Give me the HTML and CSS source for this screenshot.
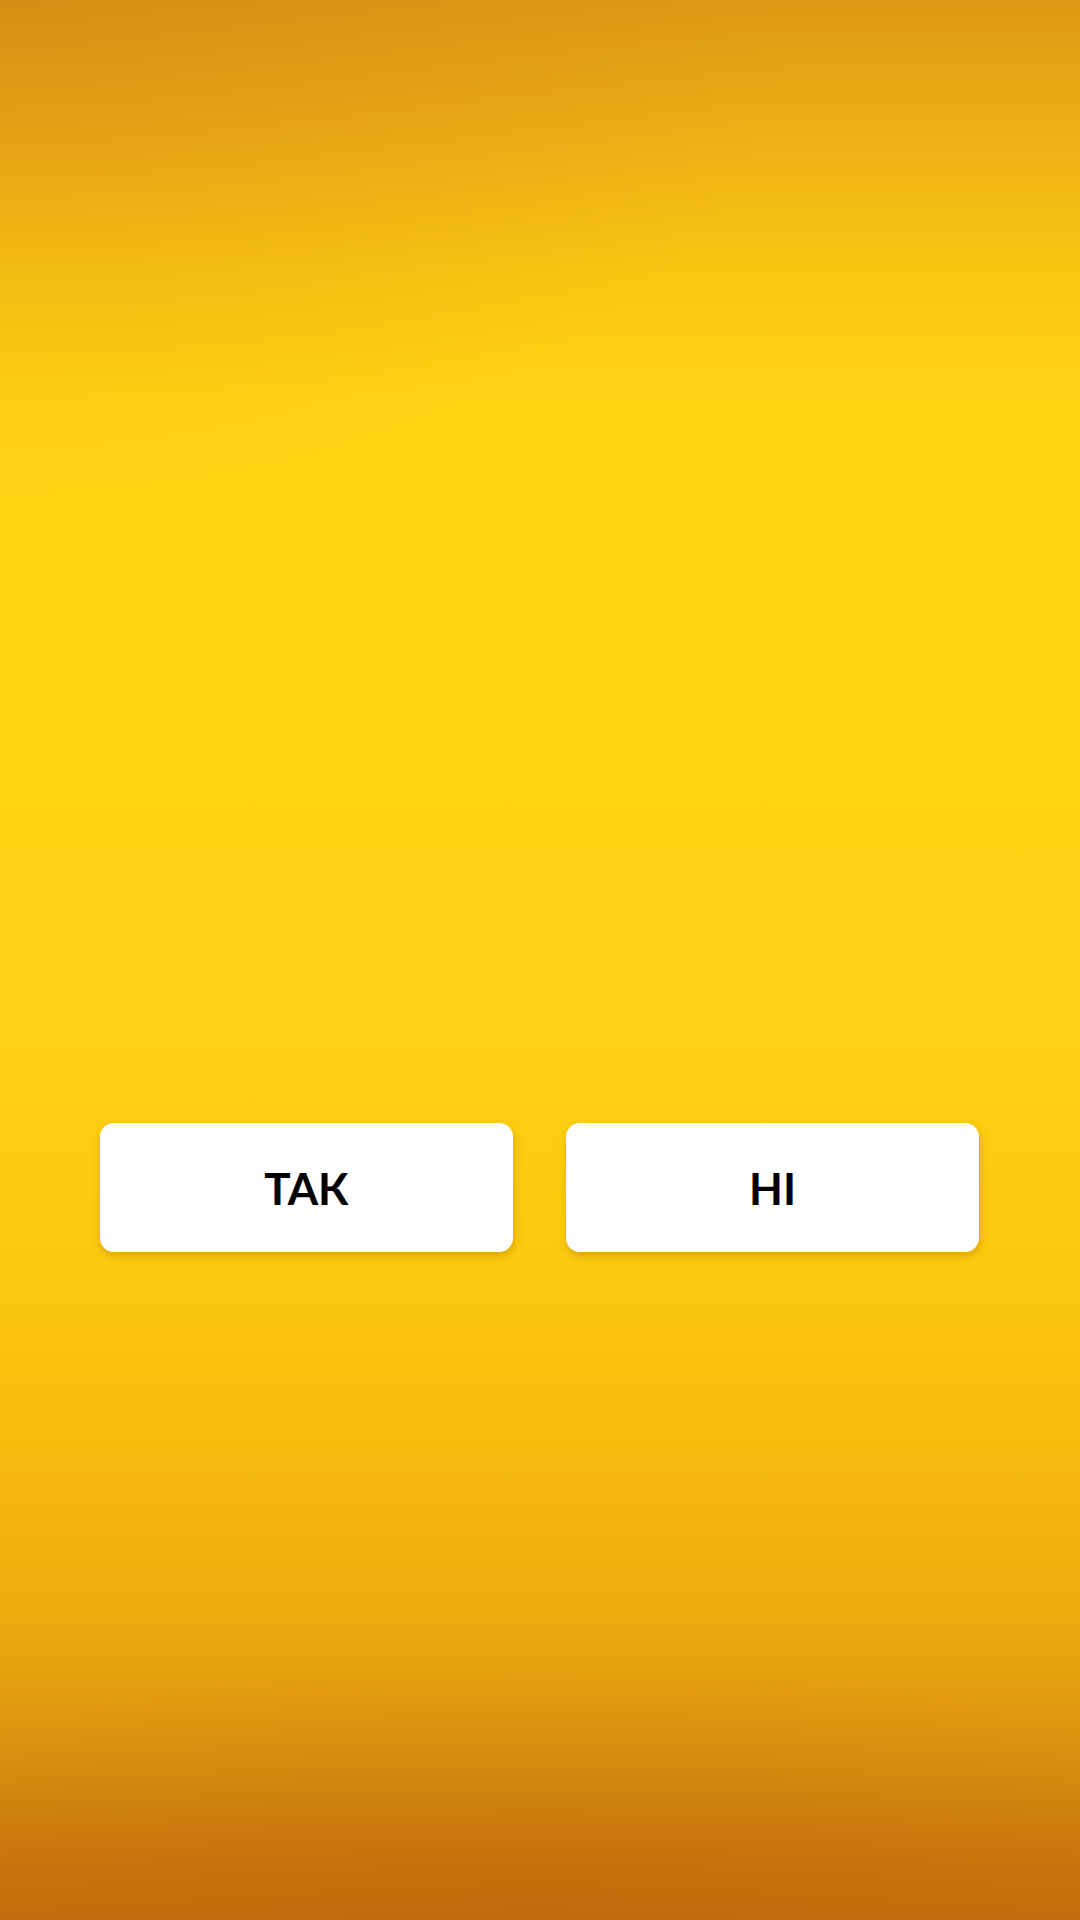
FILE: index.html
```html
<!DOCTYPE html>
<html lang="uk">
<head>
<meta charset="utf-8">
<title>Так / Ні</title>
<link rel="stylesheet" href="styles.css">
</head>
<body>
<main class="screen">
  <div class="choices">
    <button class="choice">ТАК</button>
    <button class="choice">НІ</button>
  </div>
</main>
</body>
</html>
```

FILE: styles.css
```css
html, body {
  margin: 0;
  padding: 0;
}
body {
  width: 1080px;
  height: 1920px;
  overflow: hidden;
  font-family: "Lato", "Liberation Sans", sans-serif;
}
.screen {
  box-sizing: border-box;
  width: 1080px;
  height: 1920px;
  padding: 1123px 101px 0 100px;
  background:
    radial-gradient(ellipse 800px 500px at 0% 0%, rgba(200, 115, 20, 0.3), rgba(200, 115, 20, 0) 100%),
    radial-gradient(ellipse 900px 260px at 50% 100%, rgba(180, 95, 5, 0.3), rgba(180, 95, 5, 0) 100%),
    linear-gradient(180deg,
      #dc9a14 0%,
      #eeb316 8%,
      #f9c712 14%,
      #ffd413 21%,
      #ffd413 40%,
      #fed212 52%,
      #fcc90f 66%,
      #f6bb0e 76%,
      #eba90f 85%,
      #d98f10 92%,
      #c9780d 97%,
      #c2700d 100%);
}
.choices {
  display: flex;
  gap: 53px;
}
.choice {
  flex: 0 0 413px;
  height: 129px;
  border: none;
  border-radius: 14px;
  background: #ffffff;
  color: #000000;
  font-family: "Lato", "Liberation Sans", sans-serif;
  font-weight: 700;
  font-size: 44px;
  line-height: 1;
  padding: 0;
  box-shadow: 1px 4px 8px rgba(190, 120, 0, 0.45);
}
```
